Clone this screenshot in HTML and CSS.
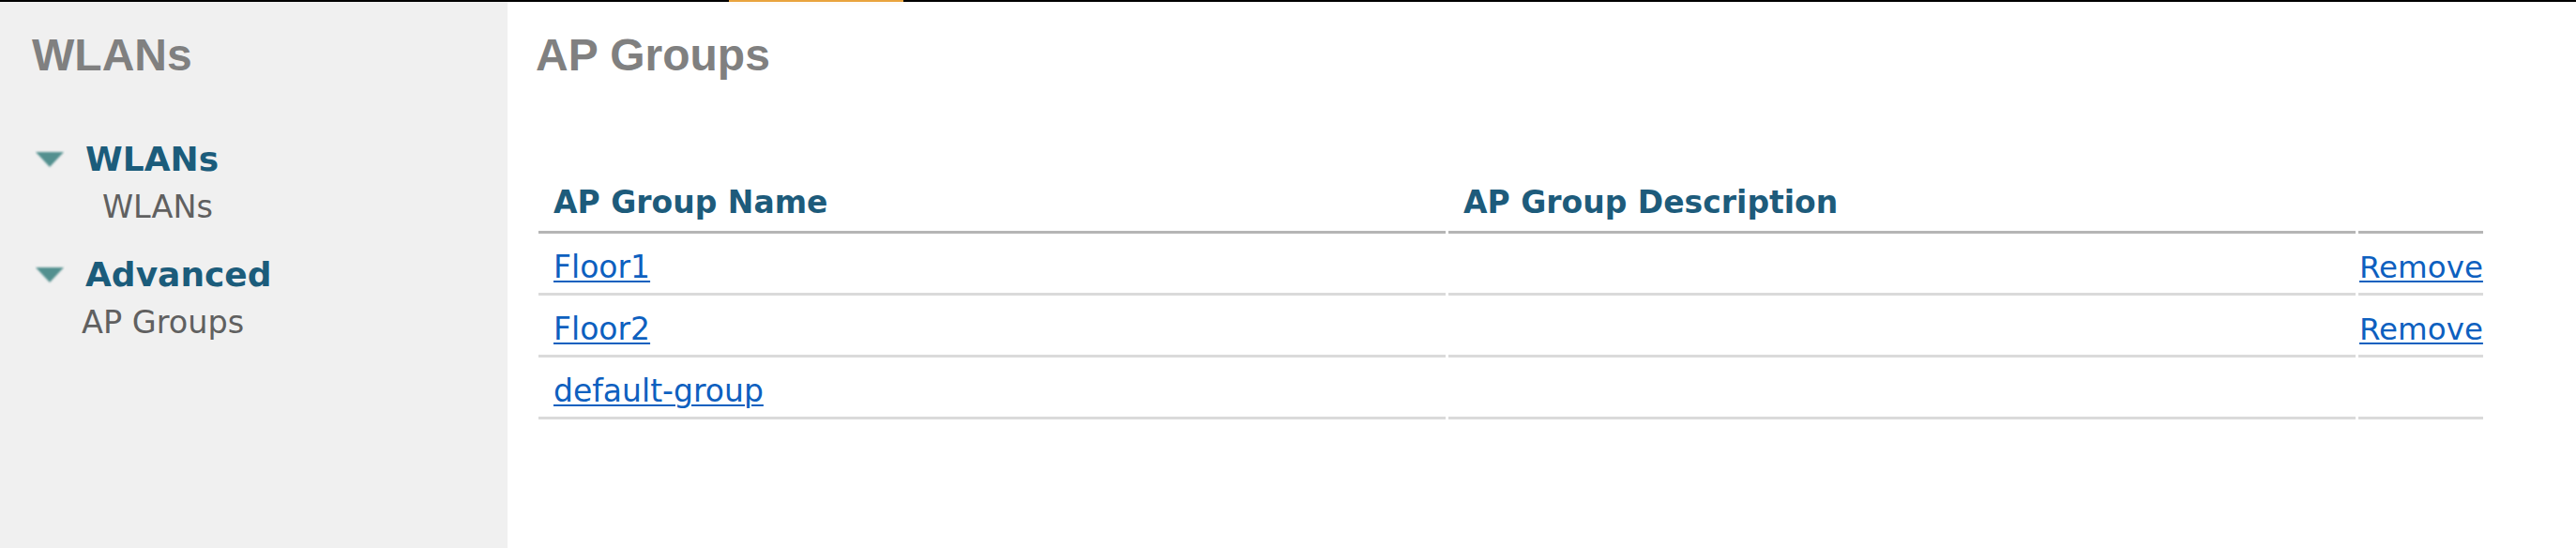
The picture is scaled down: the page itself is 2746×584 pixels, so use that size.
FILE: index.html
```html
<!DOCTYPE html>
<html lang="en">
<head>
<meta charset="utf-8">
<title>AP Groups</title>
<link rel="stylesheet" href="styles.css">
</head>
<body>
<div class="topbar"><div class="topbar-active"></div></div>
<div class="layout">
  <aside class="sidebar">
    <h2 class="sidebar-title">WLANs</h2>
    <nav class="nav">
      <div class="nav-group">
        <div class="nav-head">
          <svg class="caret" width="32" height="20" viewBox="0 0 32 20" aria-hidden="true">
            <defs><filter id="soft" x="-20%" y="-40%" width="140%" height="180%"><feGaussianBlur stdDeviation="0.9"/></filter></defs>
            <polygon points="1,2 31,2 16,18" fill="#52908f" filter="url(#soft)"/>
          </svg>
          <span>WLANs</span>
        </div>
        <div class="nav-sub nav-sub-wlans">WLANs</div>
      </div>
      <div class="nav-group">
        <div class="nav-head">
          <svg class="caret" width="32" height="20" viewBox="0 0 32 20" aria-hidden="true">
            <polygon points="1,2 31,2 16,18" fill="#52908f" filter="url(#soft)"/>
          </svg>
          <span>Advanced</span>
        </div>
        <div class="nav-sub nav-sub-ap">AP Groups</div>
      </div>
    </nav>
  </aside>
  <main class="main">
    <h1 class="page-title">AP Groups</h1>
    <table class="grid">
      <colgroup>
        <col class="col-name">
        <col class="col-desc">
        <col class="col-action">
      </colgroup>
      <thead>
        <tr>
          <th>AP Group Name</th>
          <th>AP Group Description</th>
          <th class="action"></th>
        </tr>
      </thead>
      <tbody>
        <tr>
          <td><a href="#">Floor1</a></td>
          <td></td>
          <td class="action"><a href="#">Remove</a></td>
        </tr>
        <tr>
          <td><a href="#">Floor2</a></td>
          <td></td>
          <td class="action"><a href="#">Remove</a></td>
        </tr>
        <tr>
          <td><a href="#">default-group</a></td>
          <td></td>
          <td class="action"></td>
        </tr>
      </tbody>
    </table>
  </main>
</div>
</body>
</html>
```

FILE: styles.css
```css
html, body {
  margin: 0;
  padding: 0;
  height: 100%;
}

body {
  display: flex;
  flex-direction: column;
  background: #ffffff;
  font-family: "DejaVu Sans", Verdana, sans-serif;
  overflow: hidden;
}

.topbar {
  height: 2px;
  background: #000000;
  display: flex;
  flex-shrink: 0;
}

.topbar-active {
  margin-left: 777px;
  width: 186px;
  height: 2px;
  background: #e9a43e;
  box-shadow: 0 2px 4px rgba(233, 164, 62, 0.12);
}

.layout {
  flex: 1;
  display: flex;
  min-height: 0;
}

.sidebar {
  width: 541px;
  flex-shrink: 0;
  background: #f0f0f0;
  padding-top: 33px;
  box-sizing: border-box;
}

.sidebar-title,
.page-title {
  margin: 0;
  font-family: "Liberation Sans", Arial, sans-serif;
  font-weight: bold;
  font-size: 48px;
  line-height: 48px;
  color: #808080;
}

.sidebar-title {
  padding-left: 34px;
}

.nav {
  padding-left: 37px;
  margin-top: 67px;
  display: flex;
  flex-direction: column;
  gap: 32px;
}

.nav-head {
  display: flex;
  align-items: center;
  gap: 22px;
  font-weight: bold;
  font-size: 36px;
  line-height: 40px;
  color: #1b5c7b;
}

.caret {
  display: block;
  flex-shrink: 0;
}

.nav-sub {
  margin-top: 11px;
  font-size: 33.5px;
  line-height: 40px;
  color: #606060;
}

.nav-sub-wlans {
  padding-left: 72px;
}

.nav-sub-ap {
  padding-left: 50px;
}

.main {
  flex: 1;
  padding: 33px 0 0 30px;
  min-width: 0;
}

.grid {
  margin-top: 113px;
  table-layout: fixed;
  width: 2079px;
  border-collapse: separate;
  border-spacing: 3px 0;
}

.col-name,
.col-desc {
  width: 967px;
}

.col-action {
  width: 133px;
}

.grid th {
  text-align: left;
  font-weight: bold;
  font-size: 33px;
  line-height: 40px;
  color: #1d5b7b;
  padding: 0 15px 10px 16px;
  border-bottom: 3px solid #b5b5b5;
}

.grid td {
  font-size: 33px;
  line-height: 40px;
  padding: 16px 15px 7px 16px;
  border-bottom: 3px solid #dadada;
  white-space: nowrap;
}

.grid th.action,
.grid td.action {
  padding-left: 1px;
  padding-right: 0;
}

.grid td.action a {
  font-size: 32.5px;
}

.grid a {
  color: #0d60bf;
  text-decoration: underline;
  text-decoration-thickness: 2px;
  text-underline-offset: 3px;
}
```
